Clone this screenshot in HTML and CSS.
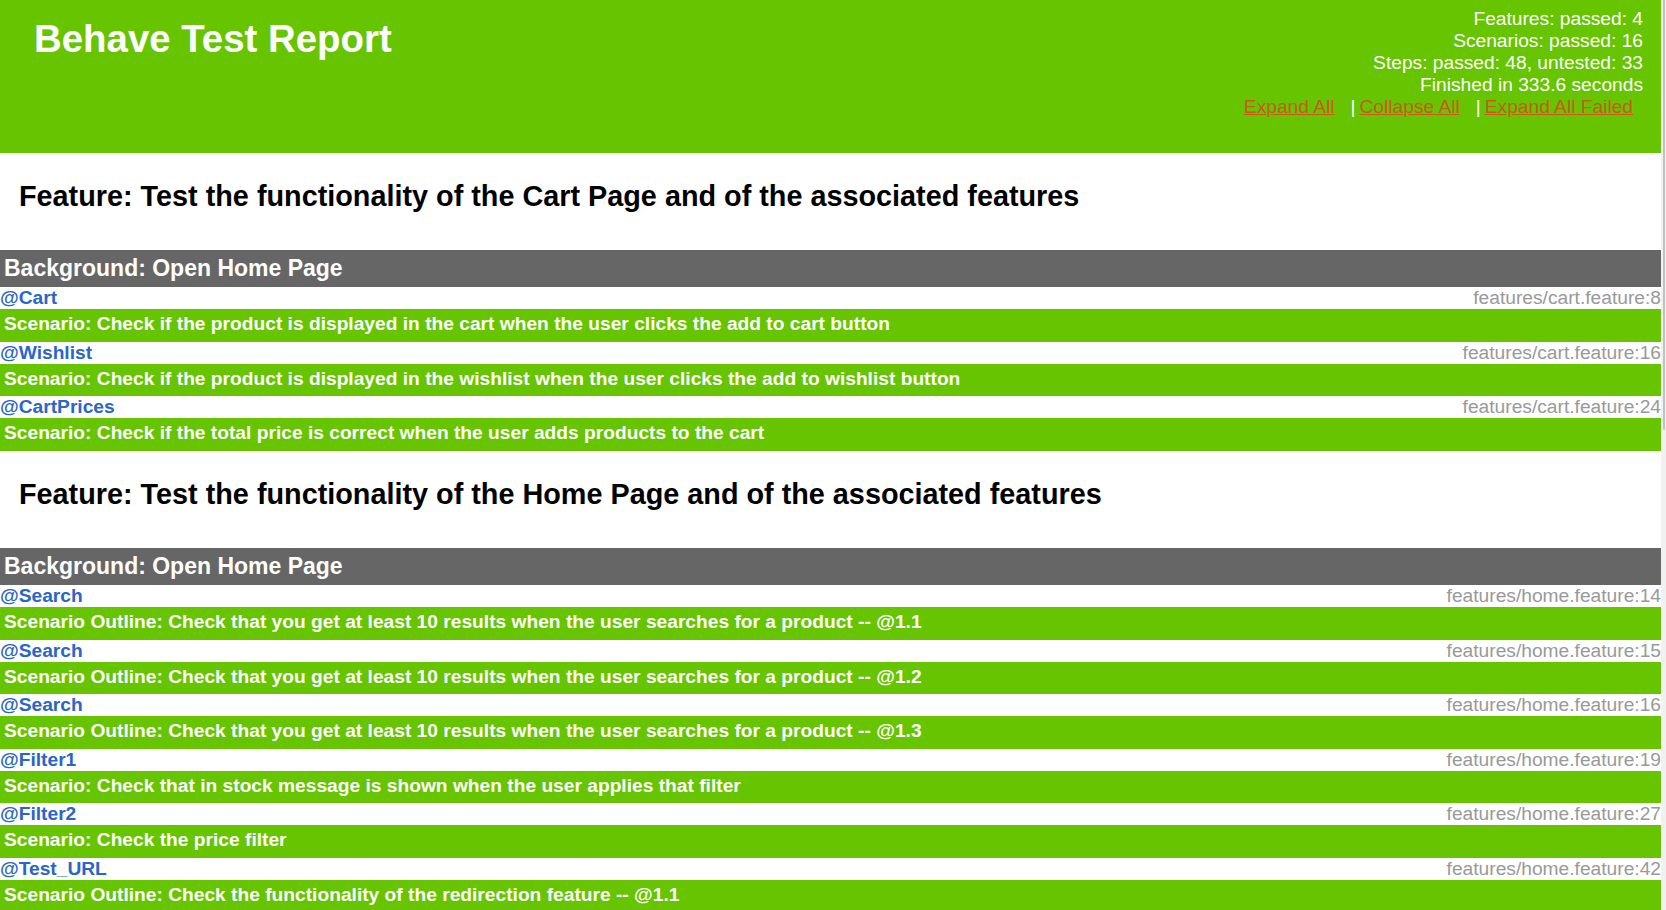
FILE: index.html
```html
<!DOCTYPE html>
<html>
<head>
<meta charset="utf-8">
<title>Behave Test Report</title>
<link rel="stylesheet" href="styles.css">
</head>
<body>
<div class="page">
  <header class="header">
    <h1 class="title">Behave Test Report</h1>
    <div class="summary">
      <div class="line">Features: passed: 4</div>
      <div class="line">Scenarios: passed: 16</div>
      <div class="line">Steps: passed: 48, untested: 33</div>
      <div class="line">Finished in 333.6 seconds</div>
      <div class="line links"><a href="#">Expand All</a><span class="sep">|</span><a href="#">Collapse All</a><span class="sep">|</span><a href="#">Expand All Failed</a></div>
    </div>
  </header>

  <section class="feature">
    <h2 class="feature-name">Feature: Test the functionality of the Cart Page and of the associated features</h2>
    <div class="background">Background: Open Home Page</div>
    <div class="scenario">
      <div class="tagrow"><span class="tag">@Cart</span><span class="loc">features/cart.feature:8</span></div>
      <div class="scname">Scenario: Check if the product is displayed in the cart when the user clicks the add to cart button</div>
    </div>
    <div class="scenario">
      <div class="tagrow"><span class="tag">@Wishlist</span><span class="loc">features/cart.feature:16</span></div>
      <div class="scname">Scenario: Check if the product is displayed in the wishlist when the user clicks the add to wishlist button</div>
    </div>
    <div class="scenario">
      <div class="tagrow"><span class="tag">@CartPrices</span><span class="loc">features/cart.feature:24</span></div>
      <div class="scname">Scenario: Check if the total price is correct when the user adds products to the cart</div>
    </div>
  </section>

  <section class="feature">
    <h2 class="feature-name">Feature: Test the functionality of the Home Page and of the associated features</h2>
    <div class="background">Background: Open Home Page</div>
    <div class="scenario">
      <div class="tagrow"><span class="tag">@Search</span><span class="loc">features/home.feature:14</span></div>
      <div class="scname">Scenario Outline: Check that you get at least 10 results when the user searches for a product -- @1.1</div>
    </div>
    <div class="scenario">
      <div class="tagrow"><span class="tag">@Search</span><span class="loc">features/home.feature:15</span></div>
      <div class="scname">Scenario Outline: Check that you get at least 10 results when the user searches for a product -- @1.2</div>
    </div>
    <div class="scenario">
      <div class="tagrow"><span class="tag">@Search</span><span class="loc">features/home.feature:16</span></div>
      <div class="scname">Scenario Outline: Check that you get at least 10 results when the user searches for a product -- @1.3</div>
    </div>
    <div class="scenario">
      <div class="tagrow"><span class="tag">@Filter1</span><span class="loc">features/home.feature:19</span></div>
      <div class="scname">Scenario: Check that in stock message is shown when the user applies that filter</div>
    </div>
    <div class="scenario">
      <div class="tagrow"><span class="tag">@Filter2</span><span class="loc">features/home.feature:27</span></div>
      <div class="scname">Scenario: Check the price filter</div>
    </div>
    <div class="scenario">
      <div class="tagrow"><span class="tag">@Test_URL</span><span class="loc">features/home.feature:42</span></div>
      <div class="scname">Scenario Outline: Check the functionality of the redirection feature -- @1.1</div>
    </div>
  </section>
</div>
<div class="scrollbar"><div class="thumb"></div></div>
</body>
</html>
```

FILE: styles.css
```css
html {
  overflow: hidden;
}
body {
  margin: 0;
  background: #ffffff;
  font-family: "Liberation Sans", Arial, sans-serif;
  font-size: 19.2px;
  color: #000;
}
.page {
  width: 1661px;
}
.header {
  background: #66c400;
  height: 153px;
  display: flex;
  justify-content: space-between;
  align-items: flex-start;
  color: #fff;
}
.title {
  margin: 0;
  padding: 16.5px 0 0 34px;
  font-size: 38.4px;
  font-weight: bold;
  line-height: normal;
}
.summary {
  padding: 7.8px 18px 0 0;
  text-align: right;
  line-height: 22px;
}
.links {
  padding-right: 10px;
}
.links a {
  color: #c65c16;
  text-decoration: underline;
}
.sep {
  color: #fff;
  margin: 0 4px 0 16px;
}
.feature-name {
  margin: 0;
  padding: 27.2px 0 36.7px 19px;
  font-size: 28.8px;
  font-weight: bold;
  line-height: normal;
}
.background {
  background: #666666;
  color: #fff;
  font-weight: bold;
  font-size: 23px;
  line-height: normal;
  padding: 5px 4px 5.5px;
}
.tagrow {
  display: flex;
  justify-content: space-between;
  line-height: 22.07px;
}
.tag {
  color: #2a66c9;
  font-weight: bold;
}
.loc {
  color: #999999;
}
.scname {
  background: #66c400;
  color: #fff;
  font-weight: bold;
  line-height: 22.07px;
  padding: 4px 4px 6.4px;
}
.scrollbar {
  position: fixed;
  top: 0;
  right: 0;
  width: 5px;
  height: 100%;
  background: #f1f1f1;
}
.thumb {
  margin: 0 1px 0 1.5px;
  height: 430px;
  background: #c1c1c1;
  border-radius: 0 0 2px 2px;
}
```
